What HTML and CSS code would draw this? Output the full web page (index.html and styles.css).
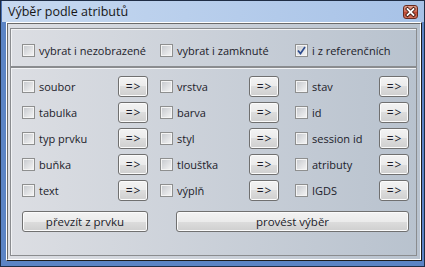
FILE: index.html
```html
<!DOCTYPE html>
<html lang="cs">
<head>
    <meta charset="UTF-8">
    <title>Výběr podle atributů</title>
    <link rel="stylesheet" href="styles.css">
</head>
<body>
    <div class="window">
        <div class="titlebar">
            <span class="title">Výběr podle atributů</span>
            <span class="close">
                <svg width="13" height="12" viewBox="0 0 13 12">
                    <path d="M3.5 3 L9.5 9 M9.5 3 L3.5 9" stroke="#3b1008" stroke-width="3.4" stroke-linecap="square"/>
                    <path d="M3.5 3 L9.5 9 M9.5 3 L3.5 9" stroke="#ffffff" stroke-width="1.8" stroke-linecap="square"/>
                </svg>
            </span>
        </div>
        <div class="frame">
            <div class="client">
                <div class="panel options">
                    <label class="check"><span class="box"></span>vybrat i nezobrazené</label>
                    <label class="check"><span class="box"></span>vybrat i zamknuté</label>
                    <label class="check"><span class="box checked"><svg width="9" height="9" viewBox="0 0 9 9"><path d="M1 4.5 L3.5 7.5 L8 1" fill="none" stroke="#2c4b8e" stroke-width="1.7"/></svg></span>i z referenčních</label>
                </div>
                <div class="panel attrs">
                    <div class="grid">
                        <label class="check"><span class="box"></span>soubor</label>
                        <button class="btn arrow">=&gt;</button>
                        <label class="check"><span class="box"></span>vrstva</label>
                        <button class="btn arrow">=&gt;</button>
                        <label class="check"><span class="box"></span>stav</label>
                        <button class="btn arrow">=&gt;</button>

                        <label class="check"><span class="box"></span>tabulka</label>
                        <button class="btn arrow">=&gt;</button>
                        <label class="check"><span class="box"></span>barva</label>
                        <button class="btn arrow">=&gt;</button>
                        <label class="check"><span class="box"></span>id</label>
                        <button class="btn arrow">=&gt;</button>

                        <label class="check"><span class="box"></span>typ prvku</label>
                        <button class="btn arrow">=&gt;</button>
                        <label class="check"><span class="box"></span>styl</label>
                        <button class="btn arrow">=&gt;</button>
                        <label class="check"><span class="box"></span>session id</label>
                        <button class="btn arrow">=&gt;</button>

                        <label class="check"><span class="box"></span>buňka</label>
                        <button class="btn arrow">=&gt;</button>
                        <label class="check"><span class="box"></span>tloušťka</label>
                        <button class="btn arrow">=&gt;</button>
                        <label class="check"><span class="box"></span>atributy</label>
                        <button class="btn arrow">=&gt;</button>

                        <label class="check"><span class="box"></span>text</label>
                        <button class="btn arrow">=&gt;</button>
                        <label class="check"><span class="box"></span>výplň</label>
                        <button class="btn arrow">=&gt;</button>
                        <label class="check"><span class="box"></span>IGDS</label>
                        <button class="btn arrow">=&gt;</button>
                    </div>
                    <div class="actions">
                        <button class="btn take">převzít z prvku</button>
                        <button class="btn run">provést výběr</button>
                    </div>
                </div>
            </div>
        </div>
    </div>
</body>
</html>
```

FILE: styles.css
```css
body {
    margin: 0;
    font-family: "Open Sans", "Noto Sans", sans-serif;
    font-size: 11px;
    color: #1c1c2a;
}
.window {
    width: 425px;
    height: 267px;
    box-sizing: border-box;
    border: 1px solid #1f2d45;
    background: #5b84c5;
    display: flex;
    flex-direction: column;
}
.titlebar {
    height: 21px;
    flex: none;
    display: flex;
    justify-content: space-between;
    align-items: flex-start;
    padding: 0 6px 0 7px;
    background: linear-gradient(to right, #c7d9f0, #a7c2e7);
    box-shadow: inset 1px 0 0 #4c74b6;
}
.title {
    font-size: 12.5px;
    line-height: 20px;
    padding-top: 1px;
    color: #161616;
}
.close {
    margin-top: 4px;
    width: 15px;
    height: 14px;
    box-sizing: border-box;
    border: 1px solid #6a2a1e;
    border-radius: 3px;
    background: linear-gradient(#e0a090, #cc6650 50%, #bd4630 50%, #d27560);
    display: flex;
    align-items: center;
    justify-content: center;
}
.frame {
    flex: 1;
    margin: 0 2px 5px 5px;
    border: 1px solid;
    border-color: #ffffff #1e1e1e #1e1e1e #ffffff;
    display: flex;
}
.client {
    flex: 1;
    border: 1px solid;
    border-color: #6a6a6a #ffffff #ffffff #6a6a6a;
    background: linear-gradient(to right, #dcdee3, #b8c2ce);
    padding: 4px 3px 3px 2px;
    display: flex;
    flex-direction: column;
}
.panel {
    box-sizing: border-box;
    border: 1px solid #8a8c8f;
    box-shadow: inset 1px 1px 0 #f2f3f5;
}
.options {
    height: 39px;
    flex: none;
    padding: 6px 0 0 11px;
    display: grid;
    grid-template-columns: 138px 135px auto;
    align-items: center;
}
.attrs {
    flex: 1;
    padding: 8px 6px 0 11px;
}
.grid {
    display: grid;
    grid-template-columns: 96px 42px 89px 46px 84px 30px;
    grid-auto-rows: 21px;
    row-gap: 5px;
    align-items: center;
}
.check {
    display: flex;
    align-items: center;
    white-space: nowrap;
}
.box {
    width: 13px;
    height: 13px;
    box-sizing: border-box;
    flex: none;
    margin-right: 4px;
    border: 1px solid #8e8f8f;
    background: linear-gradient(135deg, #c4c7cc, #f6f6f6);
    box-shadow: inset 0 0 0 1px #f4f4f4;
    display: flex;
    align-items: center;
    justify-content: center;
}
.btn {
    box-sizing: border-box;
    height: 21px;
    padding: 0;
    border: 1px solid #707070;
    border-radius: 3px;
    background: linear-gradient(#f3f3f3, #ebebeb 50%, #dddddd 50%, #cfcfcf);
    box-shadow: inset 0 0 0 1px #fbfbfb;
    font-family: inherit;
    font-size: 11.5px;
    color: #1c1c2a;
}
.arrow {
    width: 30px;
    font-size: 12px;
    letter-spacing: 1px;
    padding-left: 1px;
}
.actions {
    margin-top: 10px;
    display: flex;
    gap: 28px;
}
.take {
    width: 126px;
}
.run {
    width: 233px;
}
```
